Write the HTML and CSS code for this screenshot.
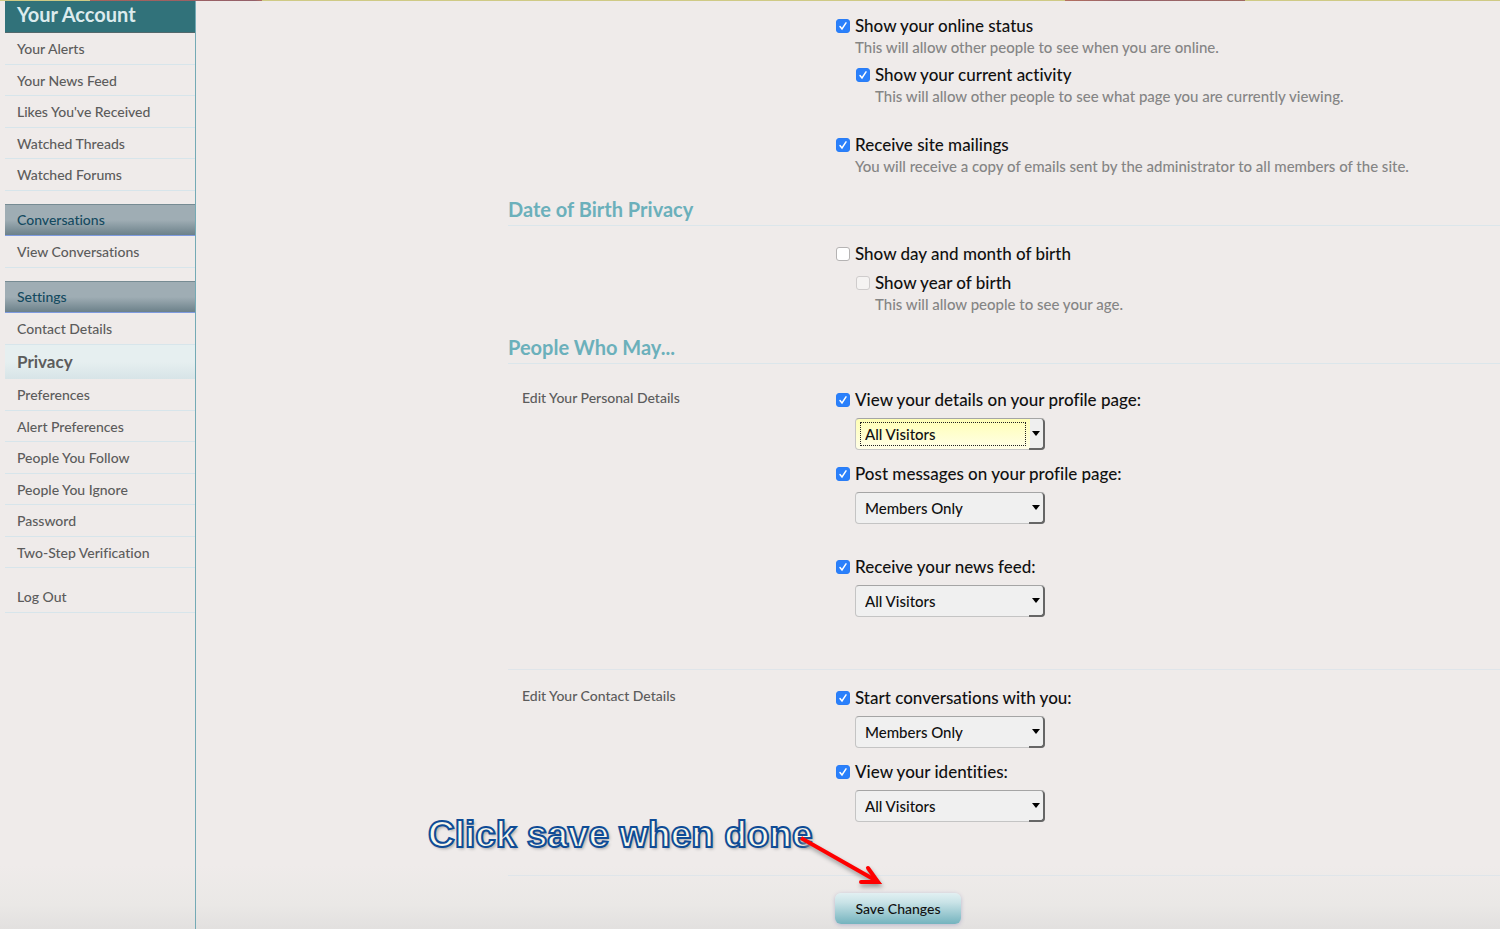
FILE: index.html
```html
<!DOCTYPE html>
<html lang="en">
<head>
  <meta charset="UTF-8">
  <title>Privacy</title>
  <link rel="stylesheet" href="styles.css">
</head>
<body>
  <div class="banner"></div>
  <div class="page">
    <nav class="sidebar">
      <h2 class="sidebar-title">Your Account</h2>
      <ul class="links">
        <li><a href="#">Your Alerts</a></li>
        <li><a href="#">Your News Feed</a></li>
        <li><a href="#">Likes You've Received</a></li>
        <li><a href="#">Watched Threads</a></li>
        <li><a href="#">Watched Forums</a></li>
      </ul>
      <h3 class="sidebar-heading"><a href="#">Conversations</a></h3>
      <ul class="links">
        <li><a href="#">View Conversations</a></li>
      </ul>
      <h3 class="sidebar-heading"><a href="#">Settings</a></h3>
      <ul class="links">
        <li><a href="#">Contact Details</a></li>
        <li class="active"><a href="#">Privacy</a></li>
        <li><a href="#">Preferences</a></li>
        <li><a href="#">Alert Preferences</a></li>
        <li><a href="#">People You Follow</a></li>
        <li><a href="#">People You Ignore</a></li>
        <li><a href="#">Password</a></li>
        <li><a href="#">Two-Step Verification</a></li>
      </ul>
      <ul class="links">
        <li><a href="#">Log Out</a></li>
      </ul>
    </nav>

    <main>
      <form onsubmit="return false;">
        <section class="fields first">
          <div class="controls">
            <div class="option">
              <input id="online" type="checkbox" checked>
              <label for="online">Show your online status</label>
              <p>This will allow other people to see when you are online.</p>
            </div>
            <div class="option sub">
              <input id="activity" type="checkbox" checked>
              <label for="activity">Show your current activity</label>
              <p>This will allow other people to see what page you are currently viewing.</p>
            </div>
            <div class="option spaced">
              <input id="mailings" type="checkbox" checked>
              <label for="mailings">Receive site mailings</label>
              <p>You will receive a copy of emails sent by the administrator to all members of the site.</p>
            </div>
          </div>
        </section>

        <h3 class="section-heading">Date of Birth Privacy</h3>
        <section class="fields">
          <div class="controls">
            <div class="option">
              <input id="dob" type="checkbox">
              <label for="dob">Show day and month of birth</label>
            </div>
            <div class="option sub">
              <input id="year" type="checkbox" disabled>
              <label for="year">Show year of birth</label>
              <p>This will allow people to see your age.</p>
            </div>
          </div>
        </section>

        <h3 class="section-heading">People Who May...</h3>
        <section class="fields people">
          <a class="side-label" href="#">Edit Your Personal Details</a>
          <div class="controls">
            <div class="option">
              <input id="view" type="checkbox" checked>
              <label id="view-label" for="view">View your details on your profile page:</label>
              <div class="select focused">
                <select aria-labelledby="view-label"><option>All Visitors</option><option>Members Only</option></select>
              </div>
            </div>
            <div class="option next">
              <input id="post" type="checkbox" checked>
              <label id="post-label" for="post">Post messages on your profile page:</label>
              <div class="select">
                <select aria-labelledby="post-label"><option>Members Only</option><option>All Visitors</option></select>
              </div>
            </div>
            <div class="option feed">
              <input id="feed" type="checkbox" checked>
              <label id="feed-label" for="feed">Receive your news feed:</label>
              <div class="select">
                <select aria-labelledby="feed-label"><option>All Visitors</option><option>Members Only</option></select>
              </div>
            </div>
          </div>
        </section>

        <section class="fields contact">
          <a class="side-label" href="#">Edit Your Contact Details</a>
          <div class="controls">
            <div class="option">
              <input id="start" type="checkbox" checked>
              <label id="start-label" for="start">Start conversations with you:</label>
              <div class="select">
                <select aria-labelledby="start-label"><option>Members Only</option><option>All Visitors</option></select>
              </div>
            </div>
            <div class="option next">
              <input id="identities" type="checkbox" checked>
              <label id="identities-label" for="identities">View your identities:</label>
              <div class="select">
                <select aria-labelledby="identities-label"><option>All Visitors</option><option>Members Only</option></select>
              </div>
            </div>
          </div>
        </section>

        <section class="fields submit">
          <div class="controls">
            <button type="submit">Save Changes</button>
          </div>
          <span class="note">Click save when done</span>
          <svg class="arrow" width="100" height="66" viewBox="0 0 100 66" aria-hidden="true">
            <path d="M6 8 L80 50" fill="none" stroke="#fe0000" stroke-width="4"/>
            <path d="M73 38 L83 52 L66 52" fill="none" stroke="#fe0000" stroke-width="4" stroke-linecap="round"/>
            <path d="M80 46 L87 54 L78 54 Z" fill="#fe0000"/>
          </svg>
        </section>
      </form>
    </main>
  </div>
</body>
</html>
```

FILE: styles.css
```css
* { box-sizing: border-box; }
html { background: #fff; }
body {
  margin: 0;
  min-height: calc(100vh - 1px);
  display: flex;
  flex-direction: column;
  overflow-x: hidden;
  font-family: 'Trebuchet MS', Lato, sans-serif;
  font-weight: 500;
  font-variant-ligatures: none;
  color: #111;
  background: linear-gradient(to top, #e2e0df, #eae8e6 24px, #efebea 64px);
}
h2, h3, p, ul { margin: 0; padding: 0; }
ul { list-style: none; }
a { color: inherit; text-decoration: none; }

.banner {
  height: 1px;
  background: linear-gradient(to right, #cfca85 6%, #a8625a 6%, #94606a 17%, #b4705f 17.5%, #cfca85 17.5%, #cfca85 71%, #b4705f 71%, #94606a 75%, #a06a62 83%, #cfca85 83%);
}
.page { flex: 1; display: flex; }

/* sidebar */
.sidebar {
  flex: 0 0 196px;
  padding-left: 5px;
  border-right: 1px solid #74aab5;
  font-size: 14px;
  color: #5c5c5c;
}
.sidebar-title {
  height: 32px;
  padding-left: 12px;
  border-bottom: 1px solid #52686c;
  background: #31727a;
  color: #dcebed;
  font-size: 20px;
  line-height: 26px;
}
.links { margin-bottom: 13px; }
.links li {
  height: 32px;
  padding-left: 12px;
  border-bottom: 1px solid #d7e5eb;
  line-height: 31px;
}
.links li:nth-child(even) { height: 31px; }
.links li.active {
  height: 34px;
  border-bottom: 0;
  background: linear-gradient(#e6eff0 50%, #d7e4e7);
  font-size: 17px;
  font-weight: bold;
  line-height: 34px;
}
.sidebar-heading {
  height: 32px;
  padding-left: 12px;
  border-top: 1px solid #768b93;
  border-bottom: 1px solid #7f9be0;
  background: linear-gradient(#9fadb4 50%, #6c818a);
  color: #144a5f;
  font-size: 14px;
  font-weight: 500;
  line-height: 30px;
}

/* settings form */
main { flex: 1; padding-left: 312px; }
.section-heading {
  height: 29px;
  border-bottom: 1px solid #dbe6eb;
  color: #6bb0bb;
  font-size: 20px;
  line-height: 25px;
}
.fields { display: grid; grid-template-columns: 328px 1fr; padding: 17px 0 21px; }
.fields.first { padding-top: 14px; }
.fields.people { padding: 25px 0 52px; }
.fields.contact { border-top: 1px solid #dfe5ea; padding: 17px 0 53px; }
.fields.submit { position: relative; border-top: 1px solid #dfe5ea; padding: 17px 0 5px; }
.side-label { padding-left: 14px; color: #5c5c5c; font-size: 14px; line-height: 18px; }
.controls { grid-column: 2; }
.option {
  display: grid;
  grid-template-columns: 14px 1fr;
  column-gap: 5px;
  align-items: center;
  font-size: 17px;
  line-height: 22px;
}
.option p, .option .select { grid-column: 2; }
.option p { color: #858585; font-size: 15px; line-height: 20px; }
.option label { justify-self: start; }
.option.sub { margin: 7px 0 0 20px; }
.option.spaced { margin-top: 28px; }
.option.next { margin-top: 13px; }
.option.feed { margin-top: 32px; }

input[type="checkbox"] {
  appearance: none;
  width: 14px;
  height: 14px;
  margin: 0;
  border: 1px solid #b5b3b3;
  border-radius: 3px;
  background: #fff;
}
input[type="checkbox"]:checked {
  border-color: #2a7df6;
  background: #2a80fb url("data:image/svg+xml,%3Csvg xmlns='http://www.w3.org/2000/svg' viewBox='0 0 12 12'%3E%3Cpath d='M3 6.5 5 9 9 2.8' fill='none' stroke='white' stroke-width='1.5' stroke-linecap='round'/%3E%3C/svg%3E");
}
input[type="checkbox"]:disabled { border-color: #cfcccc; background: #f5f3f2; }

.select { position: relative; width: 190px; margin-top: 7px; }
.select select {
  appearance: none;
  display: block;
  width: 100%;
  height: 32px;
  padding: 0 24px 0 9px;
  border: 1px solid #c4c4c4;
  border-top-color: #a5a5a5;
  border-radius: 4px;
  background: #f0f0f0;
  color: #111;
  font: inherit;
  font-size: 15px;
}
.select.focused select { background: linear-gradient(to right, transparent 174px, #efefef 174px), linear-gradient(#ffffb4, #fffee8); }
.select.focused::before {
  content: '';
  position: absolute;
  inset: 4px 19px 4px 5px;
  border: 1px dotted #222;
  pointer-events: none;
}
.select::after {
  content: '';
  position: absolute;
  top: 1px;
  right: 0;
  bottom: 0;
  width: 14px;
  border: solid #666;
  border-width: 0 2px 2px 0;
  border-radius: 0 4px 4px 0;
  background: url("data:image/svg+xml,%3Csvg xmlns='http://www.w3.org/2000/svg' width='8' height='5'%3E%3Cpath d='M0 0h8L4 5z'/%3E%3C/svg%3E") no-repeat 3px 12px;
  pointer-events: none;
}

button {
  width: 126px;
  height: 31px;
  margin-left: -1px;
  border: 0;
  border-radius: 6px;
  background: linear-gradient(#e2f0f2, #c9e3e7 30%, #74b3be);
  box-shadow: 0 1px 4px #b9b6cc;
  color: #111;
  font: inherit;
  font-size: 14px;
}

/* callout pointing at the save button */
.note {
  position: absolute;
  top: -63px;
  left: -80px;
  color: #f8f8ec;
  font: bold 37px/44px 'Liberation Sans', Arial, sans-serif;
  white-space: nowrap;
  -webkit-text-stroke: 2px #0f4c96;
  text-shadow: 2px 2px 3px #aaa;
}
.arrow {
  position: absolute;
  top: -46px;
  left: 287px;
  filter: drop-shadow(1px 3px 2px #999);
}
```
